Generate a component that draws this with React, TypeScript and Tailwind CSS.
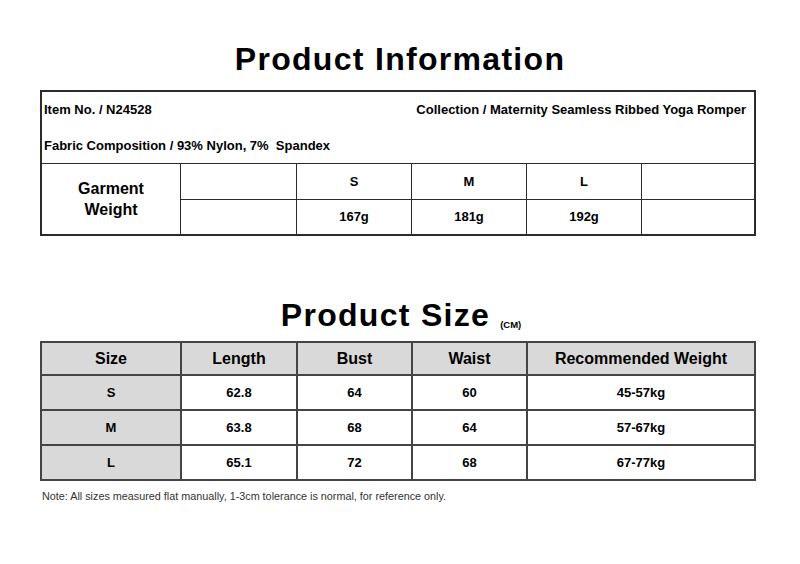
const sizes = ["S", "M", "L"];
const weights = ["167g", "181g", "192g"];

const sizeRows = [
  { size: "S", length: "62.8", bust: "64", waist: "60", weight: "45-57kg" },
  { size: "M", length: "63.8", bust: "68", waist: "64", weight: "57-67kg" },
  { size: "L", length: "65.1", bust: "72", waist: "68", weight: "67-77kg" },
];

const heads = ["Size", "Length", "Bust", "Waist", "Recommended Weight"];

export default function App() {
  return (
    <div className="h-[564px] w-[800px] bg-white text-black font-['Liberation_Sans',Arial,sans-serif]">
      {/* ---- Product Information ---- */}
      <div className="pt-[39px]">
        <h1 className="h-[40px] text-center text-[32px] font-bold leading-[40px] tracking-[1.3px]">
          Product Information
        </h1>
      </div>

      <div className="ml-[40px] mt-[11px] w-[716px] border-2 border-[#2b2b2b]">
        <div className="h-[71px] pl-[2px] pr-[8px] pt-[9px] text-[13px] font-bold leading-[18px]">
          <div className="flex justify-between">
            <span>Item No. / N24528</span>
            <span>Collection / Maternity Seamless Ribbed Yoga Romper</span>
          </div>
          <div className="mt-[18px]">Fabric Composition / 93% Nylon, 7%&nbsp; Spandex</div>
        </div>

        <div className="grid grid-cols-[138px_116px_115px_115px_115px_1fr] grid-rows-[35px_35px] border-t border-[#2b2b2b] text-[13px] font-bold">
          <div className="row-span-2 flex flex-col items-center justify-center text-[16px] leading-[21px]">
            <span>Garment</span>
            <span>Weight</span>
          </div>
          <div className="border-l border-[#2b2b2b]" />
          {sizes.map((s) => (
            <div key={s} className="flex items-center justify-center border-l border-[#2b2b2b]">
              {s}
            </div>
          ))}
          <div className="border-l border-[#2b2b2b]" />
          <div className="border-l border-t border-[#2b2b2b]" />
          {weights.map((w) => (
            <div key={w} className="flex items-center justify-center border-l border-t border-[#2b2b2b]">
              {w}
            </div>
          ))}
          <div className="border-l border-t border-[#2b2b2b]" />
        </div>
      </div>

      {/* ---- Product Size ---- */}
      <div className="mt-[59px] flex h-[40px] items-baseline justify-center pl-[2px]">
        <h2 className="text-[32px] font-bold leading-[40px] tracking-[1.3px]">Product Size</h2>
        <span className="relative top-[2px] ml-[10px] text-[9.5px] font-bold">(CM)</span>
      </div>

      <div className="ml-[40px] mt-[6px] grid w-[716px] grid-cols-[138px_116px_115px_115px_1fr] border-2 border-[#444] text-[13px] font-bold">
        {heads.map((h, i) => (
          <div
            key={h}
            className={`flex h-[31px] items-center justify-center bg-[#d9d9d9] text-[16px] ${
              i > 0 ? "border-l-2 border-[#444]" : ""
            }`}
          >
            {h}
          </div>
        ))}
        {sizeRows.map((r) => (
          <>
            <div key={r.size} className="flex h-[35px] items-center justify-center border-t-2 border-[#444] bg-[#d9d9d9]">
              {r.size}
            </div>
            <div className="flex items-center justify-center border-l-2 border-t-2 border-[#444]">{r.length}</div>
            <div className="flex items-center justify-center border-l-2 border-t-2 border-[#444]">{r.bust}</div>
            <div className="flex items-center justify-center border-l-2 border-t-2 border-[#444]">{r.waist}</div>
            <div className="flex items-center justify-center border-l-2 border-t-2 border-[#444]">{r.weight}</div>
          </>
        ))}
      </div>

      <p className="ml-[42px] mt-[7px] text-[10.8px] leading-[16px] text-[#333]">
        Note: All sizes measured flat manually, 1-3cm tolerance is normal, for reference only.
      </p>
    </div>
  );
}
